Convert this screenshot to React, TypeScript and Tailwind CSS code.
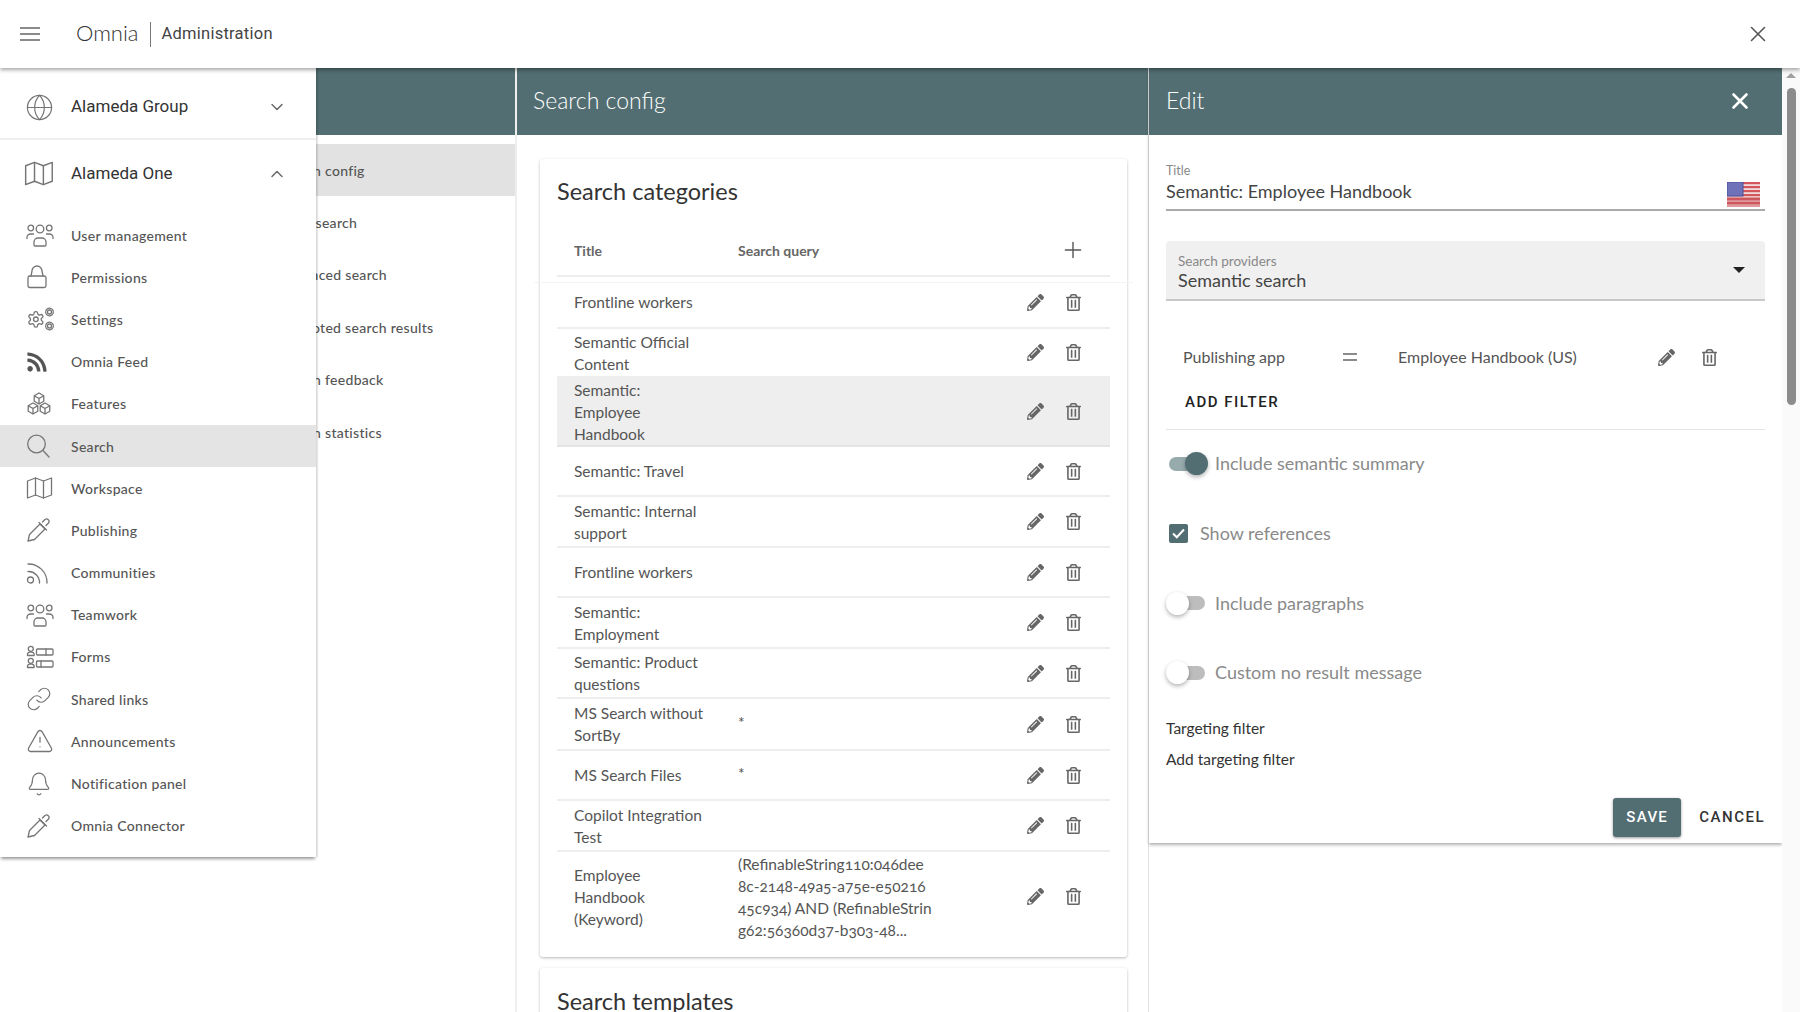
import React from "react";
import { ChevronDown, ChevronUp, Globe, Bell, TriangleAlert, Link as LinkIcon, Plus, X } from "lucide-react";
import { FaPencilAlt, FaRegTrashAlt, FaRss } from "react-icons/fa";

const S = ({ w = 28, h = 24, vb = "0 0 28 24", children }: { w?: number; h?: number; vb?: string; children: React.ReactNode }) => (
  <svg width={w} height={h} viewBox={vb} fill="none" stroke="#757575" strokeWidth={1.3} strokeLinecap="round" strokeLinejoin="round">
    {children}
  </svg>
);

const IUsers = () => (
  <S>
    <circle cx="14" cy="6" r="3.8" />
    <circle cx="4.8" cy="5" r="2.8" />
    <circle cx="23.2" cy="5" r="2.8" />
    <path d="M8 22v-3a4 4 0 0 1 4-4h4a4 4 0 0 1 4 4v3a1 1 0 0 1-1 1H9a1 1 0 0 1-1-1z" />
    <path d="M1 15.5v-1a3.5 3.5 0 0 1 3.5-3.5h3" />
    <path d="M27 15.5v-1a3.5 3.5 0 0 0-3.5-3.5h-3" />
  </S>
);
const ILock = () => (
  <S>
    <rect x="2" y="11" width="18" height="11.5" rx="1.8" />
    <path d="M5 11l1-5a5 5 0 0 1 10 0l1 5" />
  </S>
);
const gear =
  "M12.22 2h-.44a2 2 0 0 0-2 2v.18a2 2 0 0 1-1 1.73l-.43.25a2 2 0 0 1-2 0l-.15-.08a2 2 0 0 0-2.73.73l-.22.38a2 2 0 0 0 .73 2.73l.15.1a2 2 0 0 1 1 1.72v.51a2 2 0 0 1-1 1.74l-.15.09a2 2 0 0 0-.73 2.73l.22.38a2 2 0 0 0 2.73.73l.15-.08a2 2 0 0 1 2 0l.43.25a2 2 0 0 1 1 1.73V20a2 2 0 0 0 2 2h.44a2 2 0 0 0 2-2v-.18a2 2 0 0 1 1-1.73l.43-.25a2 2 0 0 1 2 0l.15.08a2 2 0 0 0 2.73-.73l.22-.39a2 2 0 0 0-.73-2.73l-.15-.08a2 2 0 0 1-1-1.74v-.5a2 2 0 0 1 1-1.74l.15-.09a2 2 0 0 0 .73-2.73l-.22-.38a2 2 0 0 0-2.73-.73l-.15.08a2 2 0 0 1-2 0l-.43-.25a2 2 0 0 1-1-1.73V4a2 2 0 0 0-2-2z";
const ISettings = () => (
  <S>
    <g transform="translate(0.5 3) scale(0.78)" strokeWidth="1.7">
      <path d={gear} />
      <circle cx="12" cy="12" r="3" />
    </g>
    <circle cx="23.5" cy="5" r="2" />
    <circle cx="23.5" cy="5" r="3.8" strokeDasharray="1.6 1" />
    <circle cx="23.5" cy="19" r="2" />
    <circle cx="23.5" cy="19" r="3.8" strokeDasharray="1.6 1" />
  </S>
);
const cube = (x: number, y: number, r: number) => {
  const a = 0.87 * r;
  const b = 0.5 * r;
  return `M${x} ${y - r}L${x + a} ${y - b}V${y + b}L${x} ${y + r}L${x - a} ${y + b}V${y - b}ZM${x - a} ${y - b}L${x} ${y}L${x + a} ${y - b}M${x} ${y}V${y + r}`;
};
const ICubes = () => (
  <S>
    <path d={cube(13, 6.5, 5.5)} />
    <path d={cube(7, 16.5, 5.5)} />
    <path d={cube(19, 16.5, 5.5)} />
  </S>
);
const ISearch = () => (
  <S>
    <circle cx="10.5" cy="10" r="8.8" />
    <path d="M17 16.5l6 6.5" />
  </S>
);
const IMap = ({ w = 28, h = 24 }: { w?: number; h?: number }) => (
  <S w={w} h={h}>
    <path d="M1.5 5l8-3 8 3 8-3v17l-8 3-8-3-8 3z" />
    <path d="M9.5 2v17M17.5 5v17" />
  </S>
);
const IPen = () => (
  <S>
    <path d="M2 23l1.5-6.5L14 6l5 5L8.5 21.5z" />
    <path d="M13 4.5l7.5 7.5" />
    <path d="M16.5 4l2.5-2.5a2.5 2.5 0 0 1 3.5 3.5L20 7.5" />
  </S>
);
const IRssThin = () => (
  <S>
    <circle cx="4.5" cy="19" r="3" />
    <path d="M2 10.5a11 11 0 0 1 11.5 11.5" />
    <path d="M2 3a18.5 18.5 0 0 1 19 19" />
  </S>
);
const IForms = () => (
  <S>
    <circle cx="4.8" cy="3.8" r="2.5" />
    <path d="M1.5 10.5v-1a2.4 2.4 0 0 1 2.4-2.4h1.8a2.4 2.4 0 0 1 2.4 2.4v1z" />
    <rect x="10.5" y="4" width="16.5" height="6" rx="1" />
    <path d="M20 4v6" />
    <circle cx="4.8" cy="15.8" r="2.5" />
    <path d="M1.5 22.5v-1a2.4 2.4 0 0 1 2.4-2.4h1.8a2.4 2.4 0 0 1 2.4 2.4v1z" />
    <rect x="10.5" y="16" width="16.5" height="6" rx="1" />
    <path d="M15 16v6" />
  </S>
);
const Lu = ({ c: C, size = 26 }: { c: typeof Bell; size?: number }) => <C size={size} color="#757575" strokeWidth={1.1} />;

const navItems: { label: string; icon: React.ReactNode; active?: boolean }[] = [
  { label: "User management", icon: <IUsers /> },
  { label: "Permissions", icon: <ILock /> },
  { label: "Settings", icon: <ISettings /> },
  { label: "Omnia Feed", icon: <FaRss size={22} color="#555" /> },
  { label: "Features", icon: <ICubes /> },
  { label: "Search", icon: <ISearch />, active: true },
  { label: "Workspace", icon: <IMap /> },
  { label: "Publishing", icon: <IPen /> },
  { label: "Communities", icon: <IRssThin /> },
  { label: "Teamwork", icon: <IUsers /> },
  { label: "Forms", icon: <IForms /> },
  { label: "Shared links", icon: <Lu c={LinkIcon} /> },
  { label: "Announcements", icon: <Lu c={TriangleAlert} size={28} /> },
  { label: "Notification panel", icon: <Lu c={Bell} /> },
  { label: "Omnia Connector", icon: <IPen /> },
];

const subNav = ["Search config", "Basic search", "Advanced search", "Promoted search results", "Search feedback", "Search statistics"];

const rows: { h: string; title: string[]; query?: string[]; star?: string; sel?: boolean }[] = [
  { h: "h-[52px]", title: ["Frontline workers"] },
  { h: "h-[49px]", title: ["Semantic Official", "Content"] },
  { h: "h-[69px]", title: ["Semantic:", "Employee", "Handbook"], sel: true },
  { h: "h-[50px]", title: ["Semantic: Travel"] },
  { h: "h-[51px]", title: ["Semantic: Internal", "support"] },
  { h: "h-[50px]", title: ["Frontline workers"] },
  { h: "h-[51px]", title: ["Semantic:", "Employment"] },
  { h: "h-[50px]", title: ["Semantic: Product", "questions"] },
  { h: "h-[52px]", title: ["MS Search without", "SortBy"], star: "*" },
  { h: "h-[50px]", title: ["MS Search Files"], star: "*" },
  { h: "h-[51px]", title: ["Copilot Integration", "Test"] },
  {
    h: "h-[89px]",
    title: ["Employee", "Handbook", "(Keyword)"],
    query: ["(RefinableString110:046dee", "8c-2148-49a5-a75e-e50216", "45c934) AND (RefinableStrin", "g62:56360d37-b303-48..."],
  },
];

const Toggle = ({ on, label }: { on?: boolean; label: string }) => (
  <div className="flex h-[69.7px] items-center">
    <div className="ml-[3px] flex h-[24px] w-[40px] shrink-0 items-center">
      <div className={`flex h-[14px] w-[36px] items-center rounded-full ${on ? "justify-end bg-[#97abad]" : "justify-start bg-[#bdbdbd]"}`}>
        <div
          className={`h-[23px] w-[23px] rounded-full shadow-[0_2px_4px_rgba(0,0,0,0.3)] ${on ? "-mr-[3px] bg-[#526e72]" : "-ml-[3px] bg-white"}`}
        />
      </div>
    </div>
    <span className="ml-[6px] text-[18px] text-[#8a8a8a]">{label}</span>
  </div>
);

const Flag = () => (
  <svg width="33" height="25" viewBox="0 0 33 25">
    <rect width="33" height="25" fill="#f3dcdc" />
    {[0, 4, 8, 12, 16, 20].map((y) => (
      <rect key={y} y={y} width="33" height="2.2" fill="#d2565c" />
    ))}
    <rect y="15" width="33" height="10" fill="#c9565c" opacity="0.5" />
    <rect width="16" height="14" fill="#6f72b8" stroke="#4a4e9a" strokeWidth="1" />
  </svg>
);

export default function App() {
  return (
    <div className="relative flex h-screen w-full flex-col overflow-hidden bg-white font-['Lato',sans-serif] text-[#555] [font-variant-numeric:oldstyle-nums]">
      <header className="relative z-30 flex h-[68px] shrink-0 items-center bg-white pl-[20px] pr-[29px] shadow-[0_2px_4px_rgba(0,0,0,0.35)]">
        <svg width="20" height="14" viewBox="0 0 20 14" stroke="#666" strokeWidth="1.6">
          <path d="M0 1h20M0 7h20M0 13h20" />
        </svg>
        <span className="ml-[36px] -mt-[3px] text-[22px] font-light text-[#333]">Omnia</span>
        <span className="ml-[11px] h-[25px] w-px bg-[#777]" />
        <span className="ml-[11px] mt-[1px] font-['Roboto',sans-serif] text-[16.5px] tracking-[0.25px] text-[#444]">Administration</span>
        <X size={26} color="#555" strokeWidth={1.5} className="ml-auto" />
      </header>

      <div className="flex min-h-0 flex-1">
        <section className="flex w-[517px] shrink-0 flex-col border-r-2 border-[#eeeeee]">
          <div className="h-[67px] shrink-0 bg-[#526e72]" />
          <ul className="mt-[9px] flex flex-col text-[14px] font-medium tracking-[0.3px] text-[#555]">
            {subNav.map((s, i) => (
              <li key={s} className={`flex h-[52.4px] items-center pl-[278px] ${i === 0 ? "bg-[#e2e2e2]" : ""}`}>
                {s}
              </li>
            ))}
          </ul>
        </section>

        <section className="w-[632px] shrink-0 border-r border-[#e4e4e4]">
          <div className="flex h-[67px] items-center bg-[#526e72] pb-[2px] pl-[16px] text-[23px] font-light text-white">Search config</div>
          <div className="relative ml-[23px] mr-[21px] mt-[24px] rounded-[3px] bg-white px-[17px] pb-[16px] shadow-[0_1px_3px_rgba(0,0,0,0.28)]">
            <h2 className="flex h-[66px] items-center text-[23.5px] font-normal text-[#333]">Search categories</h2>
            <div className="flex h-[52px] items-center border-b-2 border-[#eeeeee] text-[14px] font-bold text-[#666]">
              <span className="ml-[17px] w-[164px]">Title</span>
              <span>Search query</span>
              <Plus size={26} color="#555" strokeWidth={1.3} className="ml-auto mr-[24px]" />
            </div>
            <div className="absolute left-[-6px] right-[-6px] top-[123px] h-px bg-[#f4f4f4]" />
            {rows.map((r, i) => (
              <div
                key={i}
                className={`flex ${r.h} items-center text-[15.5px] leading-[22px] text-[#555] ${i === rows.length - 1 ? "" : "border-b-2"} ${r.sel ? "border-[#e4e4e4] bg-[#eeeeee]" : "border-[#eeeeee]"}`}
              >
                <div className="ml-[17px] w-[164px] shrink-0">
                  {r.title.map((t) => (
                    <div key={t}>{t}</div>
                  ))}
                </div>
                <div className="w-[292px] shrink-0">
                  {r.query?.map((q) => (
                    <div key={q}>{q}</div>
                  ))}
                  {r.star && <div className="-mt-[4px] h-[22px]">{r.star}</div>}
                </div>
                <FaPencilAlt size={17} color="#666" className="ml-[-3px]" />
                <FaRegTrashAlt size={17} color="#666" className="ml-[21px]" />
              </div>
            ))}
          </div>
          <div className="ml-[23px] mr-[21px] mt-[11px] h-[80px] rounded-[3px] bg-white px-[17px] pt-[19px] shadow-[0_1px_3px_rgba(0,0,0,0.28)]">
            <h2 className="text-[23.5px] font-normal leading-[28px] text-[#333]">Search templates</h2>
          </div>
        </section>

        <section className="w-[633px] shrink-0 self-start bg-white shadow-[0_2px_3px_rgba(0,0,0,0.3)]">
          <div className="flex h-[67px] items-center justify-between bg-[#526e72] pb-[2px] pl-[17px] pr-[29px] text-[23px] font-light text-white">
            <span>Edit</span>
            <X size={26} color="#fff" strokeWidth={2.4} />
          </div>
          <div className="px-[17px] pb-[6px] pt-[28px]">
            <div className="flex items-end justify-between border-b-2 border-[#aaaaaa] pb-[2px]">
              <div className="pb-[2px]">
                <div className="text-[12.5px] leading-[15px] text-[#888]">Title</div>
                <div className="-mt-[1px] text-[18px] leading-[28px] text-[#444]">Semantic: Employee Handbook</div>
              </div>
              <div className="mr-[5px]">
                <Flag />
              </div>
            </div>
            <div className="mt-[30px] flex h-[60px] items-center justify-between rounded-t-[4px] border-b-2 border-[#c8c8c8] bg-[#f0f0f0] px-[12px]">
              <div className="mt-[4px]">
                <div className="text-[13.5px] leading-[15px] text-[#888]">Search providers</div>
                <div className="text-[18px] leading-[22px] text-[#444]">Semantic search</div>
              </div>
              <svg width="12" height="6" viewBox="0 0 12 6" className="mr-[8px]">
                <path d="M0 0h12L6 6z" fill="#222" />
              </svg>
            </div>
            <div className="mt-[34px] flex h-[44px] items-center pl-[17px] text-[16px] text-[#555]">
              <span className="w-[160px]">Publishing app</span>
              <svg width="14" height="8" viewBox="0 0 14 8" stroke="#666" strokeWidth="1.3">
                <path d="M0 1h14M0 7h14" />
              </svg>
              <span className="ml-[41px] w-[260px]">Employee Handbook (US)</span>
              <FaPencilAlt size={17} color="#666" />
              <FaRegTrashAlt size={17} color="#666" className="ml-[26px]" />
            </div>
            <div className="flex h-[45px] items-center pl-[19px] pt-[1px] font-['Roboto',sans-serif] text-[15px] font-medium tracking-[1.5px] text-[#222]">
              ADD FILTER
            </div>
            <div className="mb-[-1px] mt-[5px] h-[1px] bg-[#e4e4e4]" />
            <Toggle on label="Include semantic summary" />
            <div className="flex h-[69.7px] items-center">
              <div className="ml-[3px] flex h-[19px] w-[19px] items-center justify-center rounded-[2px] bg-[#526e72]">
                <svg width="13" height="11" viewBox="0 0 13 11" fill="none" stroke="#fff" strokeWidth="2">
                  <path d="M1 5.5l3.8 3.8L12 1.5" />
                </svg>
              </div>
              <span className="ml-[12px] text-[18px] text-[#8a8a8a]">Show references</span>
            </div>
            <Toggle label="Include paragraphs" />
            <Toggle label="Custom no result message" />
            <div className="mt-[5px] flex h-[31px] items-center text-[15.5px] text-[#333]">Targeting filter</div>
            <div className="flex h-[31px] items-center text-[15.5px] text-[#333]">Add targeting filter</div>
            <div className="mt-[23px] flex items-center justify-end">
              <button className="h-[39px] w-[68px] rounded-[3px] bg-[#526e72] font-['Roboto',sans-serif] text-[15px] font-medium tracking-[1.3px] text-white shadow-[0_1px_3px_rgba(0,0,0,0.4)]">
                SAVE
              </button>
              <button className="ml-[18px] font-['Roboto',sans-serif] text-[15px] font-medium tracking-[1.5px] text-[#333]">CANCEL</button>
            </div>
          </div>
        </section>

        <div className="flex w-[18px] shrink-0 flex-col items-center bg-[#fafafa] pt-[5px]">
          <svg width="10" height="5" viewBox="0 0 10 5">
            <path d="M5 0l5 5H0z" fill="#a0a0a0" />
          </svg>
          <div className="mt-[10px] h-[317px] w-[9px] rounded-full bg-[#8c8c8c]" />
        </div>
      </div>

      <nav className="absolute left-0 top-[68px] z-20 h-[789px] w-[316px] bg-white shadow-[0_3px_3px_-1px_rgba(0,0,0,0.4),2px_0_1px_rgba(0,0,0,0.08)]">
        <div className="flex h-[72px] items-center border-b-2 border-[#eeeeee] pl-[25px] pr-[29px] pt-[8px] font-['Roboto',sans-serif] text-[17px] text-[#333]">
          <Globe size={29} color="#757575" strokeWidth={1} />
          <span className="ml-[17px]">Alameda Group</span>
          <ChevronDown size={20} color="#666" strokeWidth={1.7} className="ml-auto" />
        </div>
        <div className="flex h-[65px] items-center pl-[24px] pr-[29px] pt-[2px] font-['Roboto',sans-serif] text-[17px] text-[#333]">
          <IMap w={31} h={27} />
          <span className="ml-[16px]">Alameda One</span>
          <ChevronUp size={20} color="#666" strokeWidth={1.7} className="ml-auto" />
        </div>
        <ul className="mt-[9px]">
          {navItems.map((n) => (
            <li key={n.label} className={`flex h-[42.2px] items-center pl-[26px] text-[14px] font-medium tracking-[0.3px] text-[#555] ${n.active ? "bg-[#e4e4e4]" : ""}`}>
              <span className="flex w-[45px] shrink-0 items-center">{n.icon}</span>
              {n.label}
            </li>
          ))}
        </ul>
      </nav>
    </div>
  );
}
